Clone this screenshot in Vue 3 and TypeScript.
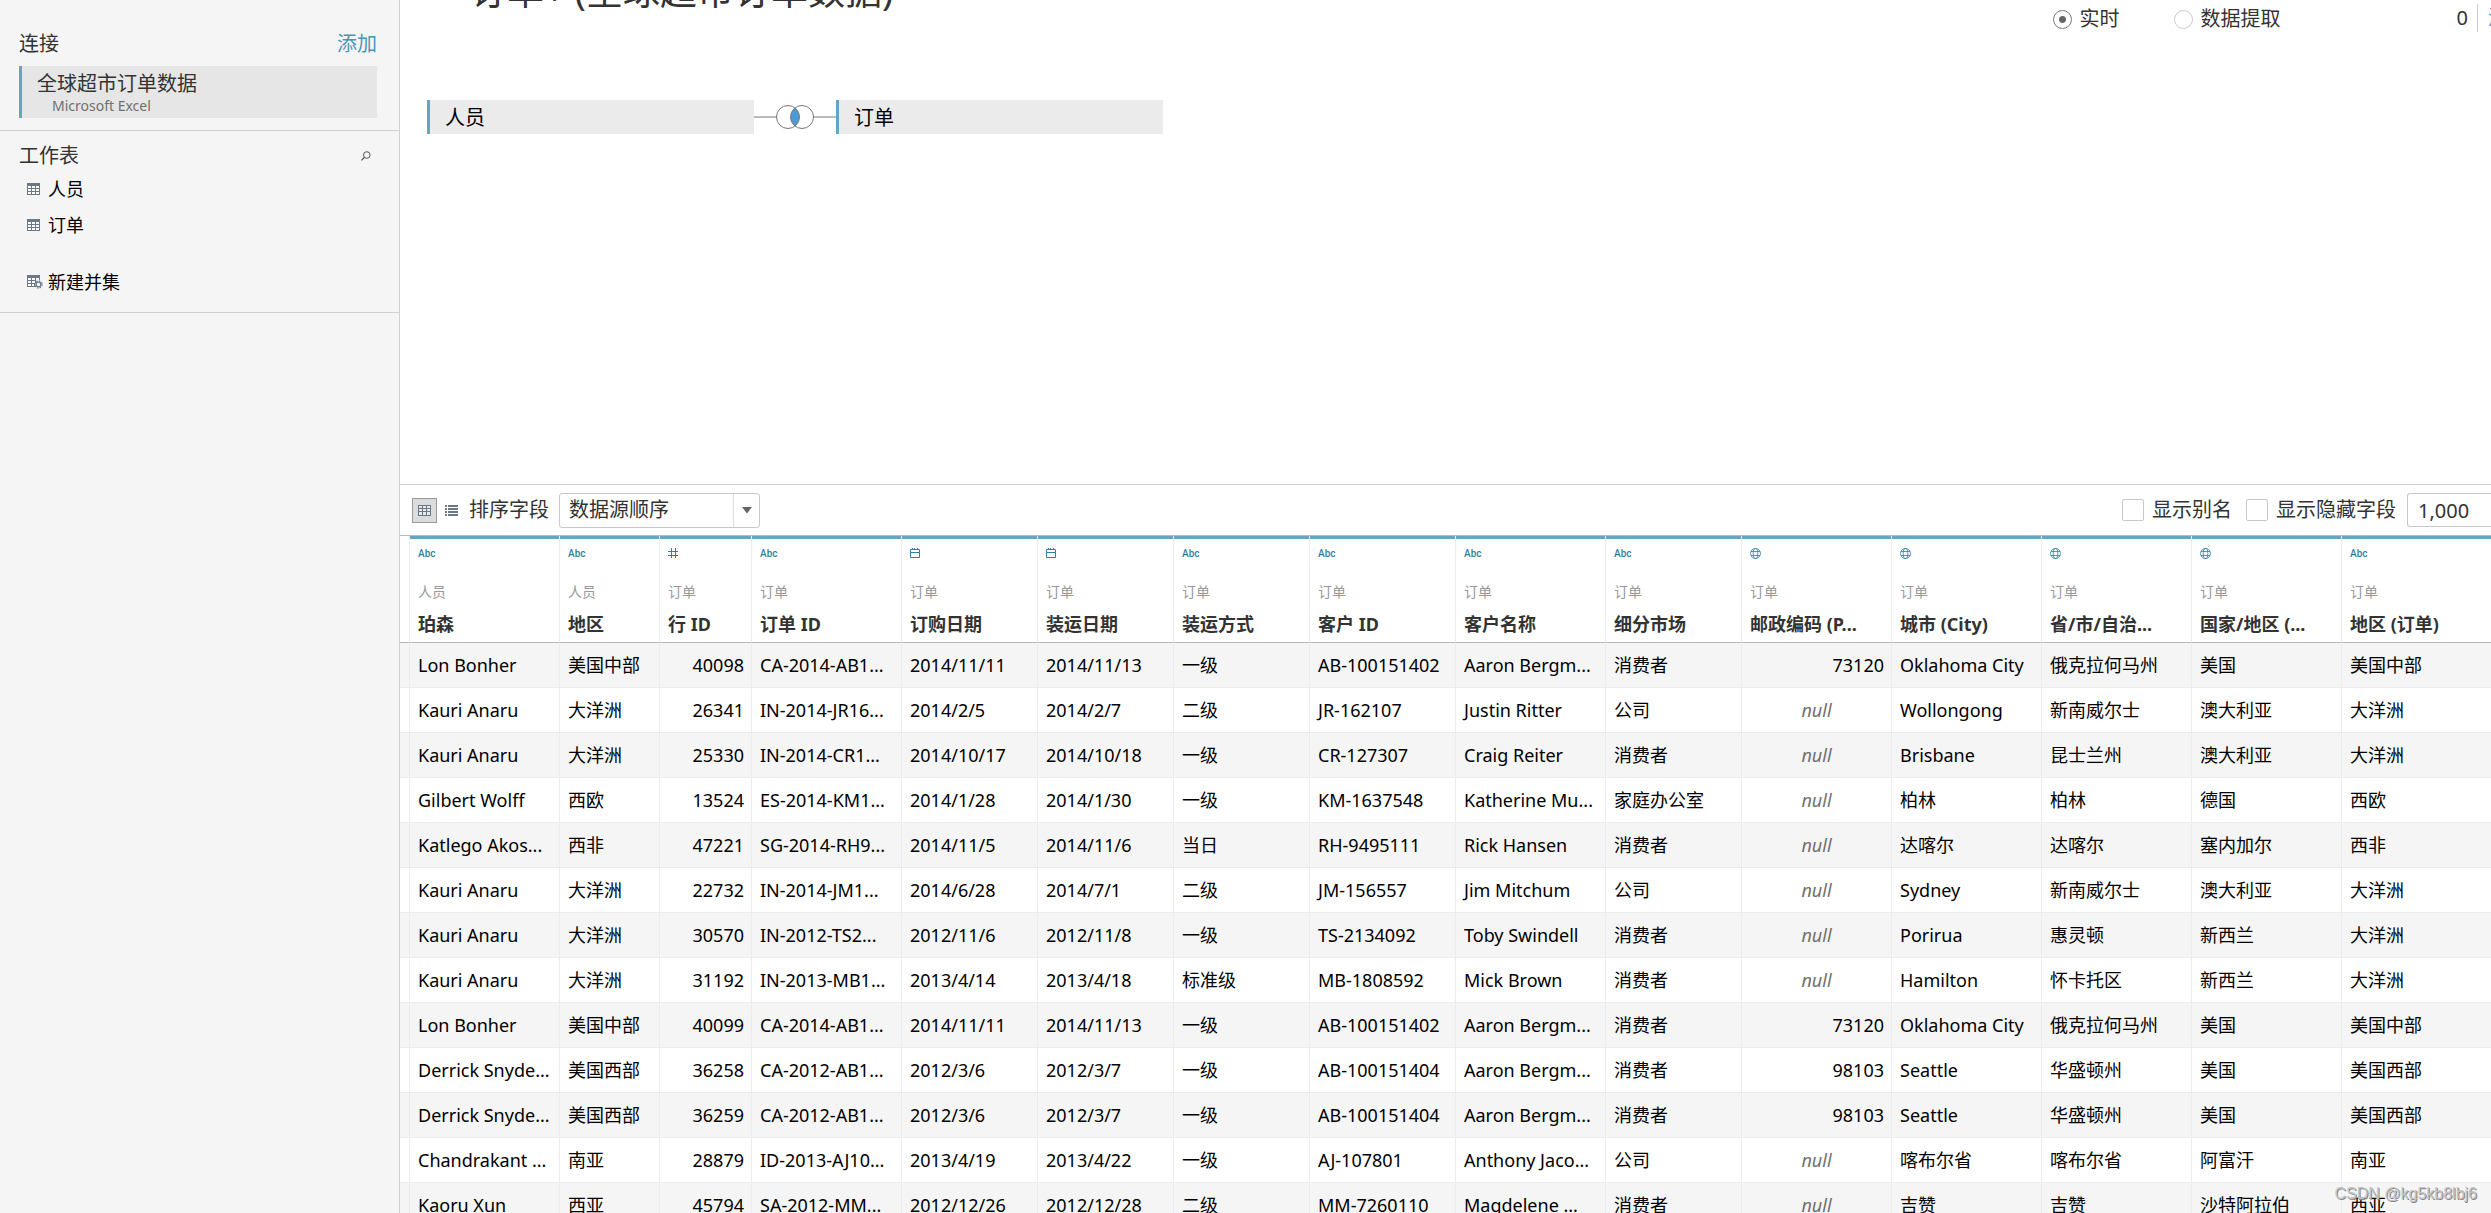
<script setup lang="ts">
import { ref } from 'vue'

type FieldKind = 'text' | 'number' | 'date' | 'geo'

interface Column {
  name: string
  source: string
  kind: FieldKind
  width: number
  numeric?: boolean
}

const columns: Column[] = [
  { name: '珀森', source: '人员', kind: 'text', width: 150 },
  { name: '地区', source: '人员', kind: 'text', width: 100 },
  { name: '行 ID', source: '订单', kind: 'number', width: 92, numeric: true },
  { name: '订单 ID', source: '订单', kind: 'text', width: 150 },
  { name: '订购日期', source: '订单', kind: 'date', width: 136 },
  { name: '装运日期', source: '订单', kind: 'date', width: 136 },
  { name: '装运方式', source: '订单', kind: 'text', width: 136 },
  { name: '客户 ID', source: '订单', kind: 'text', width: 146 },
  { name: '客户名称', source: '订单', kind: 'text', width: 150 },
  { name: '细分市场', source: '订单', kind: 'text', width: 136 },
  { name: '邮政编码 (P...', source: '订单', kind: 'geo', width: 150, numeric: true },
  { name: '城市 (City)', source: '订单', kind: 'geo', width: 150 },
  { name: '省/市/自治...', source: '订单', kind: 'geo', width: 150 },
  { name: '国家/地区 (...', source: '订单', kind: 'geo', width: 150 },
  { name: '地区 (订单)', source: '订单', kind: 'text', width: 150 },
]

const rows: (string | null)[][] = [
  ['Lon Bonher', '美国中部', '40098', 'CA-2014-AB1...', '2014/11/11', '2014/11/13', '一级', 'AB-100151402', 'Aaron Bergm...', '消费者', '73120', 'Oklahoma City', '俄克拉何马州', '美国', '美国中部'],
  ['Kauri Anaru', '大洋洲', '26341', 'IN-2014-JR16...', '2014/2/5', '2014/2/7', '二级', 'JR-162107', 'Justin Ritter', '公司', null, 'Wollongong', '新南威尔士', '澳大利亚', '大洋洲'],
  ['Kauri Anaru', '大洋洲', '25330', 'IN-2014-CR1...', '2014/10/17', '2014/10/18', '一级', 'CR-127307', 'Craig Reiter', '消费者', null, 'Brisbane', '昆士兰州', '澳大利亚', '大洋洲'],
  ['Gilbert Wolff', '西欧', '13524', 'ES-2014-KM1...', '2014/1/28', '2014/1/30', '一级', 'KM-1637548', 'Katherine Mu...', '家庭办公室', null, '柏林', '柏林', '德国', '西欧'],
  ['Katlego Akos...', '西非', '47221', 'SG-2014-RH9...', '2014/11/5', '2014/11/6', '当日', 'RH-9495111', 'Rick Hansen', '消费者', null, '达喀尔', '达喀尔', '塞内加尔', '西非'],
  ['Kauri Anaru', '大洋洲', '22732', 'IN-2014-JM1...', '2014/6/28', '2014/7/1', '二级', 'JM-156557', 'Jim Mitchum', '公司', null, 'Sydney', '新南威尔士', '澳大利亚', '大洋洲'],
  ['Kauri Anaru', '大洋洲', '30570', 'IN-2012-TS2...', '2012/11/6', '2012/11/8', '一级', 'TS-2134092', 'Toby Swindell', '消费者', null, 'Porirua', '惠灵顿', '新西兰', '大洋洲'],
  ['Kauri Anaru', '大洋洲', '31192', 'IN-2013-MB1...', '2013/4/14', '2013/4/18', '标准级', 'MB-1808592', 'Mick Brown', '消费者', null, 'Hamilton', '怀卡托区', '新西兰', '大洋洲'],
  ['Lon Bonher', '美国中部', '40099', 'CA-2014-AB1...', '2014/11/11', '2014/11/13', '一级', 'AB-100151402', 'Aaron Bergm...', '消费者', '73120', 'Oklahoma City', '俄克拉何马州', '美国', '美国中部'],
  ['Derrick Snyde...', '美国西部', '36258', 'CA-2012-AB1...', '2012/3/6', '2012/3/7', '一级', 'AB-100151404', 'Aaron Bergm...', '消费者', '98103', 'Seattle', '华盛顿州', '美国', '美国西部'],
  ['Derrick Snyde...', '美国西部', '36259', 'CA-2012-AB1...', '2012/3/6', '2012/3/7', '一级', 'AB-100151404', 'Aaron Bergm...', '消费者', '98103', 'Seattle', '华盛顿州', '美国', '美国西部'],
  ['Chandrakant ...', '南亚', '28879', 'ID-2013-AJ10...', '2013/4/19', '2013/4/22', '一级', 'AJ-107801', 'Anthony Jaco...', '公司', null, '喀布尔省', '喀布尔省', '阿富汗', '南亚'],
  ['Kaoru Xun', '西亚', '45794', 'SA-2012-MM...', '2012/12/26', '2012/12/28', '二级', 'MM-7260110', 'Magdelene ...', '消费者', null, '吉赞', '吉赞', '沙特阿拉伯', '西亚'],
]

const sheets = ['人员', '订单']
const mode = ref('live')
const sortOrder = ref('source')
const showAliases = ref(false)
const showHidden = ref(false)
const rowLimit = ref('1,000')
</script>

<template>
  <div class="app">
    <aside class="sidebar">
      <section class="connections">
        <div class="side-head">
          <h2>连接</h2>
          <a href="#" class="link">添加</a>
        </div>
        <button type="button" class="connection">
          <span class="conn-name">全球超市订单数据</span>
          <span class="conn-type">Microsoft Excel</span>
        </button>
      </section>
      <section class="sheets">
        <div class="side-head">
          <h2>工作表</h2>
          <button type="button" class="search" aria-label="搜索">
            <svg width="10" height="10" viewBox="0 0 10 10" fill="none" stroke="#555">
              <circle cx="5.8" cy="4" r="3.3" />
              <path d="M3.5 6.3 0.4 9.4" stroke-width="1.3" />
            </svg>
          </button>
        </div>
        <ul>
          <li v-for="s in sheets" :key="s">
            <svg width="16" height="12" viewBox="0 0 16 12">
              <path fill="#6b7888" d="M0 0h13v12H0z" />
              <path fill="#fff" d="M1 3h3v2H1zM5 3h3v2H5zM9 3h3v2H9zM1 6h3v2H1zM5 6h3v2H5zM9 6h3v2H9zM1 9h3v2H1zM5 9h3v2H5zM9 9h3v2H9z" />
            </svg>
            <span>{{ s }}</span>
          </li>
        </ul>
        <button type="button" class="new-union">
          <svg width="16" height="14" viewBox="0 0 16 14">
            <path fill="#6b7888" d="M0 0h13v5H9v3H8v4H0z" />
            <path fill="#fff" d="M1 3h3v2H1zM5 3h3v2H5zM9 3h3v2H9zM1 6h3v2H1zM5 6h3v2H5zM1 9h3v2H1zM5 9h2v2H5z" />
            <circle cx="11.5" cy="9.5" r="3.6" fill="none" stroke="#6b7888" stroke-width="1.2" stroke-dasharray="1.5 1.33" />
            <circle cx="11.5" cy="9.5" r="2.4" fill="#fff" stroke="#6b7888" stroke-width="1.3" />
          </svg>
          <span>新建并集</span>
        </button>
      </section>
    </aside>

    <main class="main">
      <section class="canvas">
        <header class="canvas-head">
          <h1>订单+ (全球超市订单数据)</h1>
          <div class="options">
            <fieldset class="mode">
              <legend>连接</legend>
              <label><input v-model="mode" type="radio" name="mode" value="live" />实时</label>
              <label><input v-model="mode" type="radio" name="mode" value="extract" />数据提取</label>
            </fieldset>
            <div class="filters">
              <span class="filter-count">0</span>
              <a href="#" class="link filter-add">添加</a>
            </div>
          </div>
        </header>
        <div class="join">
          <div class="node">人员</div>
          <div class="joint">
            <svg width="38" height="26" viewBox="0 0 38 26">
              <circle cx="12" cy="13" r="11.5" fill="#fff" />
              <circle cx="26" cy="13" r="11.5" fill="#fff" />
              <path d="M19 3.900a11.500 11.500 0 0 1 0 18.200a11.500 11.500 0 0 1 0-18.200z" fill="#4e9bd4" />
              <circle cx="12" cy="13" r="11.5" fill="none" stroke="#777" />
              <circle cx="26" cy="13" r="11.5" fill="none" stroke="#777" />
            </svg>
          </div>
          <div class="node">订单</div>
        </div>
      </section>

      <section class="data">
        <div class="toolbar">
          <button type="button" class="view active" aria-label="网格">
            <svg width="13" height="11" viewBox="0 0 13 11">
              <path fill="#6b7888" d="M0 0h13v11H0z" />
              <path fill="#e8e8e8" d="M1 1h3v2H1zM5 1h3v2H5zM9 1h3v2H9zM1 4h3v2H1zM5 4h3v2H5zM9 4h3v2H9zM1 7h3v3H1zM5 7h3v3H5zM9 7h3v3H9z" />
            </svg>
          </button>
          <button type="button" class="view" aria-label="列表">
            <svg width="13" height="11" viewBox="0 0 13 11">
              <path fill="#6b7888" d="M0 0h2v2H0zM3 0h10v2H3zM0 3h2v2H0zM3 3h10v2H3zM0 6h2v2H0zM3 6h10v2H3zM0 9h2v2H0zM3 9h10v2H3z" />
            </svg>
          </button>
          <label class="sort-label" for="sort">排序字段</label>
          <div class="select">
            <select id="sort" v-model="sortOrder">
              <option value="source">数据源顺序</option>
            </select>
            <span class="select-arrow">
              <svg width="10" height="7" viewBox="0 0 10 7"><path fill="#666" d="M0 0h10L5 6.5z" /></svg>
            </span>
          </div>
          <div class="tool-right">
            <label><input v-model="showAliases" type="checkbox" />显示别名</label>
            <label><input v-model="showHidden" type="checkbox" />显示隐藏字段</label>
            <input v-model="rowLimit" class="limit" type="text" aria-label="行数" />
          </div>
        </div>

        <div class="grid">
          <table>
            <colgroup>
              <col class="gutter-col" />
              <col v-for="c in columns" :key="c.name" :style="{ width: c.width + 'px' }" />
            </colgroup>
            <thead>
              <tr>
                <td class="gutter"></td>
                <th v-for="c in columns" :key="c.name" scope="col">
                  <span class="kind">
                    <template v-if="c.kind === 'text'">Abc</template>
                    <svg v-else-if="c.kind === 'number'" width="11" height="11" viewBox="0 0 11 11">
                      <path fill="#2f7f9f" d="M0 3h10v1H0zM0 7h10v1H0zM3 0h1v10H3zM7 0h1v10H7z" />
                    </svg>
                    <svg v-else-if="c.kind === 'date'" width="11" height="11" viewBox="0 0 11 11" fill="none" stroke="#2f7f9f">
                      <path d="M.5 1.5h9v8h-9zM0 4.5h10M2.500 0v2M4.500 0v2M7.500 0v2" />
                    </svg>
                    <svg v-else width="12" height="12" viewBox="0 0 12 12" fill="none" stroke="#2f7f9f" stroke-width="0.8">
                      <circle cx="5.500" cy="5.500" r="5" />
                      <ellipse cx="5.500" cy="5.500" rx="2.300" ry="5" />
                      <path d="M1 3.500h9M1 7.500h9" />
                    </svg>
                  </span>
                  <span class="source">{{ c.source }}</span>
                  <span class="name">{{ c.name }}</span>
                </th>
              </tr>
            </thead>
            <tbody>
              <tr v-for="(r, i) in rows" :key="i">
                <td class="gutter"></td>
                <td v-for="(v, j) in r" :key="j" :class="{ num: columns[j].numeric && v !== null, null: v === null }">{{ v ?? 'null' }}</td>
              </tr>
            </tbody>
          </table>
        </div>
      </section>
    </main>
    <div class="watermark">CSDN @kg5kb8lbj6</div>
  </div>
</template>

<style>
body {
  margin: 0;
  overflow: hidden;
}
</style>

<style scoped>
.app,
.app * {
  box-sizing: border-box;
}
.app {
  display: flex;
  height: 100vh;
  overflow: hidden;
  background: #fff;
  color: #333;
  font: 20px/28px "Noto Sans", "Noto Sans CJK SC", sans-serif;
}
button,
input,
select {
  font: inherit;
  color: inherit;
}
button {
  border: 0;
  padding: 0;
  background: none;
  text-align: left;
}
h1,
h2,
ul,
fieldset {
  margin: 0;
  padding: 0;
  border: 0;
  font-weight: 400;
  list-style: none;
}
.link {
  color: #4996b8;
  text-decoration: none;
}
svg {
  display: block;
  flex: none;
}

.sidebar {
  flex: 0 0 400px;
  background: #f5f5f5;
  border-right: 1px solid #d0d0d0;
}
.connections {
  padding: 30px 22px 12px 19px;
  border-bottom: 1px solid #d0d0d0;
}
.side-head {
  display: flex;
  justify-content: space-between;
  align-items: center;
}
h2 {
  font-size: 20px;
}
.connection {
  display: block;
  width: 100%;
  height: 52px;
  margin-top: 8px;
  padding: 0 0 0 15px;
  border-left: 3px solid #62a5c8;
  background: #e6e6e6;
}
.conn-name,
.conn-type {
  display: block;
}
.conn-type {
  padding-left: 15px;
  font-size: 14px;
  line-height: 16px;
  color: #707070;
}
.sheets {
  padding: 11px 22px 12px 19px;
  border-bottom: 1px solid #d0d0d0;
}
.search {
  margin-right: 6px;
}
.sheets li,
.new-union {
  display: flex;
  align-items: center;
  gap: 5px;
  height: 36px;
  padding-left: 8px;
  font-size: 18px;
  color: #000;
}
.sheets ul {
  margin-top: 1px;
}
.new-union {
  margin-top: 21px;
}

.main {
  flex: 1;
  min-width: 0;
  display: flex;
  flex-direction: column;
}
.canvas {
  flex: none;
  height: 484px;
  overflow: hidden;
}
.canvas-head {
  display: flex;
  justify-content: space-between;
  align-items: flex-end;
  height: 36px;
}
h1 {
  padding-left: 70px;
  font-size: 37px;
  line-height: 56px;
  margin-bottom: 17px;
}
.options {
  display: flex;
  align-items: flex-end;
}
.mode {
  display: flex;
  gap: 54px;
  padding-bottom: 3px;
  margin-right: 176px;
}
.mode legend {
  padding: 0;
  line-height: 28px;
}
.mode label,
.tool-right label {
  display: flex;
  align-items: center;
  gap: 8px;
}
input[type="radio"] {
  appearance: none;
  width: 19px;
  height: 19px;
  margin: 0;
  border: 1px solid #ccc;
  border-radius: 50%;
}
input[type="radio"]:checked {
  border-color: #777;
  background: radial-gradient(circle, #666 3px, transparent 4px);
}
.filters {
  display: flex;
  padding-bottom: 4px;
}
.filter-count {
  padding-right: 9px;
  border-right: 1px solid #ccc;
}
.filter-add {
  width: 13px;
  padding-left: 10px;
  overflow: hidden;
  white-space: nowrap;
}
.join {
  display: flex;
  align-items: center;
  padding: 64px 0 0 27px;
}
.node {
  width: 327px;
  height: 34px;
  padding: 4px 0 0 15px;
  border-left: 3px solid #62a5c8;
  background: #ebebeb;
  color: #000;
}
.joint {
  width: 82px;
  display: flex;
  justify-content: center;
  background: linear-gradient(#bbb, #bbb) center / 100% 2px no-repeat;
}

.data {
  flex: 1;
  min-height: 0;
  border-top: 1px solid #d0d0d0;
  overflow: hidden;
}
.toolbar {
  display: flex;
  align-items: center;
  height: 51px;
  padding-left: 12px;
  border-bottom: 1px solid #bababa;
}
.view {
  display: flex;
  align-items: center;
  justify-content: center;
  width: 25px;
  height: 25px;
}
.view.active {
  margin-right: 2px;
  border: 1px solid #999;
  background: #dcdcdc;
}
.sort-label {
  margin: 0 10px 0 5px;
}
.select {
  display: flex;
  width: 201px;
  height: 35px;
  position: relative;
}
select {
  appearance: none;
  width: 100%;
  padding: 0 0 0 9px;
  border: 1px solid #c8c8c8;
  border-radius: 3px;
  background: #fff;
}
.select-arrow {
  position: absolute;
  top: 1px;
  right: 1px;
  bottom: 1px;
  width: 26px;
  display: flex;
  align-items: center;
  justify-content: center;
  border-left: 1px solid #ddd;
  pointer-events: none;
}
.tool-right {
  display: flex;
  align-items: center;
  gap: 14px;
  margin-left: auto;
}
input[type="checkbox"] {
  appearance: none;
  width: 22px;
  height: 22px;
  margin: 0;
  border: 1px solid #c8c8c8;
  border-radius: 2px;
}
.limit {
  width: 84px;
  height: 34px;
  padding: 0 0 0 10px;
  margin-left: -3px;
  border: 1px solid #c8c8c8;
  border-right: 0;
  border-radius: 3px 0 0 3px;
}

.grid {
  overflow: hidden;
}
table {
  width: 2092px;
  table-layout: fixed;
  border-collapse: separate;
  border-spacing: 0;
  font-size: 18px;
}
.gutter-col {
  width: 10px;
}
th,
td {
  height: 45px;
  padding: 0 0 0 8px;
  border-right: 1px solid #ececec;
  border-bottom: 1px solid #ececec;
  overflow: hidden;
  white-space: nowrap;
  text-align: left;
}
th,
thead td {
  height: 107px;
  border-bottom-color: #b8b8b8;
  background: linear-gradient(#62a5c8, #62a5c8) top / 100% 3px no-repeat padding-box;
  vertical-align: top;
}
td.gutter {
  padding: 0;
}
thead td.gutter {
  background: none;
}
tbody td {
  color: #000;
}
tbody tr:nth-child(odd) {
  background: #f5f5f5;
}
td.num {
  padding: 0 7px 0 0;
  text-align: right;
}
td.null {
  padding: 0;
  text-align: center;
  font-style: italic;
  color: #707070;
}
.kind,
.source,
.name {
  display: block;
}
.kind {
  height: 20px;
  margin-top: 12px;
  font: 500 10px/12px Roboto, sans-serif;
  color: #2f7f9f;
}
.source {
  margin-top: 14px;
  font-size: 14px;
  font-weight: 400;
  line-height: 20px;
  color: #999;
}
.name {
  margin-top: 8px;
}
.watermark {
  position: absolute;
  right: 14px;
  bottom: 8px;
  font: 16px/22px "Liberation Sans", sans-serif;
  color: #c4c4c4;
  text-shadow: 1px 1px 0 #888;
}
</style>
